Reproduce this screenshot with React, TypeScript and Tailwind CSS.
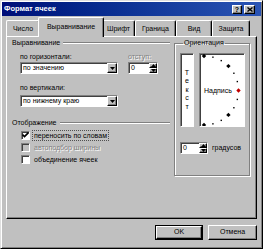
import type { ReactNode } from "react";

const raised =
  "border border-t-white border-l-white border-r-black border-b-black shadow-[inset_-1px_-1px_0_#808080]";
const sunken =
  "border border-t-[#808080] border-l-[#808080] border-r-white border-b-white shadow-[inset_1px_1px_0_#404040]";
const disabled = "text-[#808080] [text-shadow:1px_1px_0_#fff]";

const tabs = [
  { label: "Число", w: "w-[34px]" },
  { label: "Выравнивание", w: "w-[66px]", active: true },
  { label: "Шрифт", w: "w-[33px]" },
  { label: "Граница", w: "w-[41px]" },
  { label: "Вид", w: "w-[36px]" },
  { label: "Защита", w: "w-[38px]" },
];

function Arrow({ up }: { up?: boolean }) {
  return (
    <svg width="5" height="3" viewBox="0 0 5 3">
      <path d={up ? "M0 3h5L2.5 0z" : "M0 0h5L2.5 3z"} fill="#000" />
    </svg>
  );
}

function Select({ value }: { value: string }) {
  return (
    <div className={`flex h-[12px] w-[98px] bg-white ${sunken}`}>
      <span className="flex-1 pl-[2px] leading-[10px]">{value}</span>
      <span
        className={`flex w-[10px] items-center justify-center bg-[#c0c0c0] ${raised}`}
      >
        <Arrow />
      </span>
    </div>
  );
}

function Spin({ w }: { w: string }) {
  return (
    <div className={`flex h-[12px] ${w} bg-white ${sunken}`}>
      <span className="flex-1 pl-[2px] leading-[10px]">0</span>
      <div className="flex w-[8px] flex-col">
        <span
          className={`flex h-[5px] items-center justify-center bg-[#c0c0c0] ${raised}`}
        >
          <Arrow up />
        </span>
        <span
          className={`flex h-[5px] items-center justify-center bg-[#c0c0c0] ${raised}`}
        >
          <Arrow />
        </span>
      </div>
    </div>
  );
}

function GroupHeader({ label }: { label: string }) {
  return (
    <div className="flex h-[8px] items-center">
      <span className="leading-[8px]">{label}</span>
      <span className="ml-[3px] h-[2px] flex-1 border-t border-b border-t-[#808080] border-b-white" />
    </div>
  );
}

function Check({
  label,
  checked,
  off,
  focus,
}: {
  label: ReactNode;
  checked?: boolean;
  off?: boolean;
  focus?: boolean;
}) {
  return (
    <div className="flex h-[12px] items-center">
      <span
        className={`flex h-[9px] w-[9px] items-center justify-center ${
          off ? "bg-[#c0c0c0]" : "bg-white"
        } ${sunken}`}
      >
        {checked && (
          <svg width="7" height="6" viewBox="0 0 7 6">
            <path d="M0.5 2.5 L2.5 4.5 L6.5 0.5" stroke="#000" strokeWidth="1.6" fill="none" />
          </svg>
        )}
      </span>
      <span
        className={`ml-[2px] h-[11px] px-[1px] leading-[9px] ${
          focus ? "border border-dotted border-[#505050]" : "border border-transparent"
        } ${off ? disabled : ""}`}
      >
        {label}
      </span>
    </div>
  );
}

function Dial() {
  const cx = 4;
  const cy = 36.5;
  const r = 34.5;
  const dots = [];
  for (let a = -90; a <= 90; a += 15) {
    const rad = (a * Math.PI) / 180;
    const x = cx + r * Math.cos(rad);
    const y = cy - r * Math.sin(rad);
    const big = a % 45 === 0;
    dots.push(
      big ? (
        <path
          key={a}
          d={`M${x} ${y - 2.2}L${x + 2.2} ${y}L${x} ${y + 2.2}L${x - 2.2} ${y}z`}
          fill={a === 0 ? "#c00000" : "#000"}
        />
      ) : (
        <rect key={a} x={x - 0.7} y={y - 0.7} width="1.4" height="1.4" fill="#000" />
      ),
    );
  }
  return (
    <div className={`h-[74px] w-[46px] bg-white ${sunken}`}>
      <svg width="44" height="72" viewBox="0 0 44 72">
        {dots}
        <text
          x="4"
          y="39"
          fontSize="7"
          fontFamily="Liberation Sans, Arial, sans-serif"
          fill="#000"
        >
          Надпись
        </text>
      </svg>
    </div>
  );
}

export default function App() {
  return (
    <div className="flex h-[249px] w-[263px] flex-col overflow-hidden border border-t-[#dfdfdf] border-l-[#dfdfdf] border-r-black border-b-black bg-[#c0c0c0] font-['Liberation_Sans',Arial,sans-serif] text-[7px] text-black shadow-[inset_1px_1px_0_#fff,inset_-1px_-1px_0_#808080]">
      {/* title bar */}
      <div className="mx-[1px] mt-[1px] flex h-[14px] items-center bg-linear-to-r from-[#000c78] to-[#2a54b4] pl-[2px] pr-[6px]">
        <span className="flex-1 text-[7.5px] font-bold leading-[14px] text-white">
          Формат ячеек
        </span>
        <div className="flex gap-[2px]">
          <span
            className={`flex h-[9px] w-[10px] items-center justify-center bg-[#c0c0c0] text-[7px] font-bold leading-[7px] ${raised}`}
          >
            ?
          </span>
          <span
            className={`flex h-[9px] w-[11px] items-center justify-center bg-[#c0c0c0] ${raised}`}
          >
            <svg width="6" height="5" viewBox="0 0 6 5">
              <path d="M0.5 0.5 L5.5 4.5 M5.5 0.5 L0.5 4.5" stroke="#000" strokeWidth="1.4" />
            </svg>
          </span>
        </div>
      </div>

      <div className="px-[5px]">
        {/* tabs */}
        <div className="relative z-10 flex h-[20px] items-end">
          {tabs.map((t) => (
            <div
              key={t.label}
              className={`flex items-center justify-center rounded-t-[2px] border-t border-l border-r border-t-white border-l-white border-r-black bg-[#c0c0c0] shadow-[inset_-1px_0_0_#808080] ${t.w} ${
                t.active ? "relative z-10 -mx-[2px] -mb-[1px] h-[20px] pb-[1px]" : "h-[16px]"
              }`}
            >
              <span className="leading-[8px]">{t.label}</span>
            </div>
          ))}
        </div>

        {/* panel */}
        <div className={`flex h-[183px] pl-[5px] pt-[2px] ${raised}`}>
          <div className="w-[158px]">
            <GroupHeader label="Выравнивание" />
            <div className="pl-[8px]">
              <div className="mt-[6px] flex">
                <div>
                  <div className="h-[8px] leading-[8px]">по горизонтали:</div>
                  <div className="mt-[1px]">
                    <Select value="по значению" />
                  </div>
                </div>
                <div className="ml-[10px]">
                  <div className={`h-[8px] leading-[8px] ${disabled}`}>отступ:</div>
                  <div className="mt-[1px]">
                    <Spin w="w-[30px]" />
                  </div>
                </div>
              </div>
              <div className="mt-[10px] h-[8px] leading-[8px]">по вертикали:</div>
              <div className="mt-[3px]">
                <Select value="по нижнему краю" />
              </div>
            </div>

            <div className="mt-[12px]">
              <GroupHeader label="Отображение" />
            </div>
            <div className="mt-[2px] pl-[9px]">
              <Check label="переносить по словам" checked focus />
              <Check label="автоподбор ширины" off />
              <Check label="объединение ячеек" />
            </div>
          </div>

          <fieldset className="ml-[4px] h-[137px] w-[76px] border border-[#808080] pl-[5px] pt-[6px] shadow-[inset_1px_1px_0_#fff,1px_1px_0_#fff]">
            <legend className="ml-[3px] px-[1px] leading-[8px]">Ориентация</legend>
            <div className="flex gap-[5px]">
              <div
                className={`flex h-[74px] w-[14px] flex-col items-center justify-center bg-white leading-[8.5px] ${sunken}`}
              >
                {"Текст".split("").map((c, i) => (
                  <span key={i}>{c}</span>
                ))}
              </div>
              <Dial />
            </div>
            <div className="mt-[15px] flex items-center">
              <Spin w="w-[28px]" />
              <span className="ml-[4px] leading-[8px]">градусов</span>
            </div>
          </fieldset>
        </div>

        {/* buttons */}
        <div className="mt-[6px] flex justify-end gap-[5px]">
          <div className="h-[15px] w-[48px] border border-black">
            <div className={`flex h-full items-center justify-center ${raised}`}>OK</div>
          </div>
          <div className={`flex h-[15px] w-[49px] items-center justify-center ${raised}`}>
            Отмена
          </div>
        </div>
      </div>
    </div>
  );
}
